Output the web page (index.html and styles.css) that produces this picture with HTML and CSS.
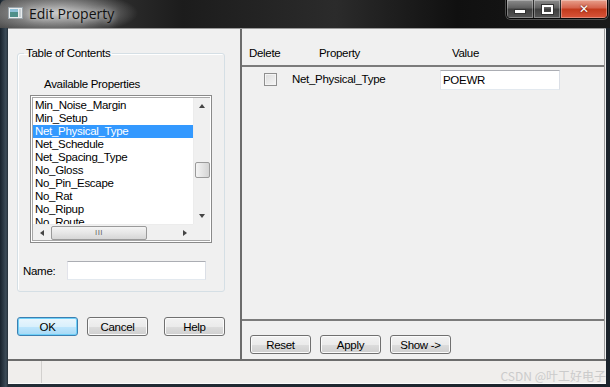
FILE: index.html
```html
<!DOCTYPE html>
<html lang="en">
<head>
    <meta charset="UTF-8">
    <title>Edit Property</title>
    <link rel="stylesheet" href="styles.css">
</head>
<body>

<div class="window">
    <div class="titlebar">
        <svg class="app-icon" width="15" height="12" viewBox="0 0 15 12">
            <rect x="0.5" y="0.5" width="14" height="11" fill="#e8ecee" stroke="#9aa4aa"/>
            <rect x="2" y="2" width="8" height="8" fill="#4f8f8a"/>
            <rect x="2" y="2" width="8" height="3" fill="#8fc0d8"/>
            <rect x="11" y="2" width="2" height="8" fill="#c8d0d4"/>
        </svg>
        <span class="title">Edit Property</span>
        <div class="caption">
            <span class="cap min"><i></i></span>
            <span class="cap max"><i></i></span>
            <span class="cap close">&#x2715;</span>
        </div>
    </div>

    <div class="client">
        <div class="main">
            <div class="left">
                <fieldset class="group">
                    <legend>Table of Contents</legend>
                    <div class="avail">Available Properties</div>
                    <div class="listbox">
                        <div class="list-inner">
                            <ul class="items">
                                <li>Min_Noise_Margin</li>
                                <li>Min_Setup</li>
                                <li class="selected">Net_Physical_Type</li>
                                <li>Net_Schedule</li>
                                <li>Net_Spacing_Type</li>
                                <li>No_Gloss</li>
                                <li>No_Pin_Escape</li>
                                <li>No_Rat</li>
                                <li>No_Ripup</li>
                                <li>No_Route</li>
                            </ul>
                            <div class="vscroll">
                                <span class="arrow up"></span>
                                <div class="vtrack"><span class="vthumb"></span></div>
                                <span class="arrow down"></span>
                            </div>
                            <div class="hscroll">
                                <span class="arrow leftw"></span>
                                <div class="htrack"><span class="hthumb">III</span></div>
                                <span class="arrow rightw"></span>
                            </div>
                            <div class="corner"></div>
                        </div>
                    </div>
                    <div class="name-row">
                        <span class="name-label">Name:</span>
                        <span class="field name-field"></span>
                    </div>
                </fieldset>
                <div class="left-buttons">
                    <span class="btn default">OK</span>
                    <span class="btn cancel">Cancel</span>
                    <span class="btn help">Help</span>
                </div>
            </div>

            <div class="right">
                <div class="header">
                    <span class="col-delete">Delete</span>
                    <span class="col-prop">Property</span>
                    <span>Value</span>
                </div>
                <div class="rows">
                    <div class="row">
                        <span class="check"></span>
                        <span class="prop">Net_Physical_Type</span>
                        <span class="field value-field">POEWR</span>
                    </div>
                </div>
                <div class="right-buttons">
                    <span class="btn">Reset</span>
                    <span class="btn">Apply</span>
                    <span class="btn">Show -&gt;</span>
                </div>
            </div>
        </div>

        <div class="statusbar">
            <div class="pane first"></div>
            <div class="pane rest"><span class="watermark">CSDN @叶工好电子</span></div>
        </div>
    </div>
</div>

</body>
</html>
```

FILE: styles.css
```css
html, body { margin: 0; padding: 0; }
body { width: 610px; height: 387px; overflow: hidden; font-family: 'Liberation Sans', Arial, sans-serif; font-size: 11.5px; letter-spacing: -0.3px; color: #000; }

.window   { width: 610px; height: 387px; background: linear-gradient(to right, #18222c 0, #3d4c58 6px, #232d36 8px, #1b232b 100%); display: flex; flex-direction: column; }

/* title bar */
.titlebar { height: 28px; flex: none; display: flex; align-items: flex-start; border-radius: 6px 6px 0 0;
            background: radial-gradient(ellipse 80px 22px at 58px 13px, rgba(210,210,210,0.9) 0, rgba(180,180,180,0.65) 45%, rgba(90,90,90,0) 100%),
                        linear-gradient(to right, #4a4a4a 0, #1c1c1c 30%, #2b2b2b 55%, #101010 75%, #1a1a1a 100%); }
.app-icon { margin: 7px 0 0 8px; flex: none; }
.title    { margin: 4px 0 0 6px; font-family: 'Open Sans', sans-serif; font-size: 14px; letter-spacing: 0; color: #111; text-shadow: 0 0 6px rgba(255,255,255,0.9); }

.caption  { margin-left: auto; margin-right: 2px; display: flex; height: 18px; border: 1px solid rgba(0,0,0,0.7); border-top: none; border-radius: 0 0 5px 5px; overflow: hidden; box-shadow: 0 0 0 1px rgba(255,255,255,0.25); }
.cap      { display: flex; align-items: center; justify-content: center; height: 18px; border-right: 1px solid rgba(0,0,0,0.6); }
.cap.min, .cap.max { width: 26px; background: linear-gradient(#8c8c8c 0, #5e5e5e 45%, #3e3e3e 50%, #555 100%); box-shadow: inset 0 0 0 1px rgba(255,255,255,0.3); }
.cap.min i { display: block; width: 10px; height: 3px; background: #fff; margin-top: 5px; border: 1px solid #333; }
.cap.max i { display: block; width: 7px; height: 5px; border: 2px solid #fff; outline: 1px solid #333; }
.cap.close { width: 46px; border-right: none; color: #fff; font-family: 'DejaVu Sans', sans-serif; font-size: 12px; font-weight: bold; text-shadow: 0 0 2px #400;
             background: linear-gradient(#e8a08c 0, #d4614a 45%, #c23a1c 50%, #d9553a 100%); box-shadow: inset 0 0 0 1px rgba(255,255,255,0.3); }

/* client area */
.client   { margin-left: 8px; width: 598px; height: 356px; background: #f0f0f0; display: flex; flex-direction: column; border-top: 1px solid #9a9a9a; box-sizing: border-box; }
.main     { height: 330px; display: flex; }

.left     { width: 232px; flex: none; padding-left: 9px; box-sizing: border-box; }
.group    { margin: 17px 0 0 0; width: 208px; box-sizing: border-box; padding: 0 12px 11px 12px; border: 1px solid #d5dfe5; border-radius: 3px; box-shadow: inset 1px 1px 0 #fff; min-inline-size: 0; }
.group legend { padding: 0 2px; margin-left: -6px; line-height: 14px; }

.avail    { margin: 17px 0 0 14px; line-height: 14px; }

.listbox  { margin-top: 4px; height: 148px; box-sizing: border-box; border: 1px solid #8a8a8a; padding: 1px; background: #fff; }
.list-inner { height: 100%; box-sizing: border-box; border: 1px solid #a7a7a7; display: grid; grid-template-columns: 160px 17px; grid-template-rows: 126px 16px; }

.items    { margin: 0; padding: 1px 0 0 0; list-style: none; overflow: hidden; background: #fff; }
.items li { line-height: 13px; height: 13px; padding-left: 2px; white-space: nowrap; }
.items li.selected { background: #3399ff; color: #fff; }

.vscroll  { background: #f0f0f0; display: flex; flex-direction: column; align-items: center; border-left: 1px solid #ececec; }
.vtrack   { flex: 1; display: flex; flex-direction: column; }
.vthumb   { margin-top: 47px; width: 13px; height: 14px; border: 1px solid #9a9a9a; border-radius: 2px; background: linear-gradient(to right, #f4f4f4, #e4e4e4 50%, #d4d4d4); }
.hscroll  { background: #f0f0f0; display: flex; align-items: center; border-top: 1px solid #ececec; }
.htrack   { flex: 1; display: flex; height: 100%; align-items: center; }
.hthumb   { margin-left: 1px; width: 94px; height: 12px; border: 1px solid #9a9a9a; border-radius: 2px; box-sizing: content-box; background: linear-gradient(#f4f4f4, #e6e6e6 50%, #d6d6d6);
            font-size: 8px; line-height: 12px; letter-spacing: 0.5px; color: #666; text-align: center; }
.corner   { background: #f0f0f0; }

.arrow    { flex: none; display: flex; align-items: center; justify-content: center; }
.vscroll .arrow { height: 17px; width: 17px; }
.hscroll .arrow { width: 17px; height: 16px; }
.arrow::before { content: ""; width: 0; height: 0; border: 3px solid transparent; }
.arrow.up::before     { border-bottom: 4px solid #444; border-top: none; margin-top: -2px; }
.arrow.down::before   { border-top: 4px solid #444; border-bottom: none; }
.arrow.leftw::before  { border-right: 4px solid #444; border-left: none; }
.arrow.rightw::before { border-left: 4px solid #444; border-right: none; }

.name-row   { margin: 18px 0 0 -7px; display: flex; align-items: center; height: 19px; }
.name-label { width: 44px; }
.field      { box-sizing: border-box; border: 1px solid #abadb3; border-color: #abadb3 #dbdfe6 #e3e9ef #e2e3ea; background: #fff; }
.name-field { width: 139px; height: 19px; }

.left-buttons { margin-top: 25px; display: flex; }
.btn      { width: 61px; height: 19px; box-sizing: border-box; display: flex; align-items: center; justify-content: center; border: 1px solid #707070; border-radius: 3px;
            background: linear-gradient(#f2f2f2 0, #ebebeb 50%, #dddddd 51%, #cfcfcf 100%); box-shadow: inset 0 0 0 1px #fbfbfb; }
.btn.default { border-color: #3c7fb1; background: linear-gradient(#eaf6fd 0, #d9f0fc 50%, #bee6fd 51%, #a7d9f5 100%); box-shadow: inset 0 0 0 1px #6fd0f8; }
.btn.cancel  { margin-left: 9px; }
.btn.help    { margin-left: 16px; }

/* right side */
.right    { flex: 1; display: flex; flex-direction: column; border-left: 2px solid #6c6c6c; border-right: 1px solid #9c9c9c; margin-right: 1px; }
.header   { height: 38px; flex: none; box-sizing: border-box; padding: 17px 0 0 7px; line-height: 14px; display: flex; border-bottom: 2px solid #7b7b7b; }
.col-delete { width: 70px; }
.col-prop   { width: 133px; }
.rows     { height: 254px; flex: none; box-sizing: border-box; border-bottom: 2px solid #7b7b7b; }
.row      { display: flex; align-items: center; height: 24px; padding-left: 22px; }
.check    { width: 13px; height: 13px; box-sizing: border-box; border: 1px solid #8f8f8f; background: linear-gradient(135deg, #dcdcdc, #f6f6f6); box-shadow: inset 0 0 0 1px #f4f4f4; }
.prop     { margin-left: 15px; width: 148px; }
.value-field { width: 120px; height: 20px; padding-left: 2px; line-height: 18px; margin-top: 1px; }

.right-buttons { padding: 14px 0 0 8px; display: flex; gap: 9px; }

/* status bar */
.statusbar { height: 25px; flex: none; display: flex; border-top: 2px solid #6c6c6c; background: #f0eeec; border-bottom: 1px solid #fbfbfb; box-sizing: border-box; }
.pane.first { width: 33px; border-right: 1px solid #d2d0ce; }
.pane.rest  { flex: 1; display: flex; justify-content: flex-end; align-items: flex-end; }
.watermark  { font-family: 'Noto Sans CJK SC', sans-serif; font-size: 12px; letter-spacing: 0; line-height: 14px; color: #cbcbcb; }
```
